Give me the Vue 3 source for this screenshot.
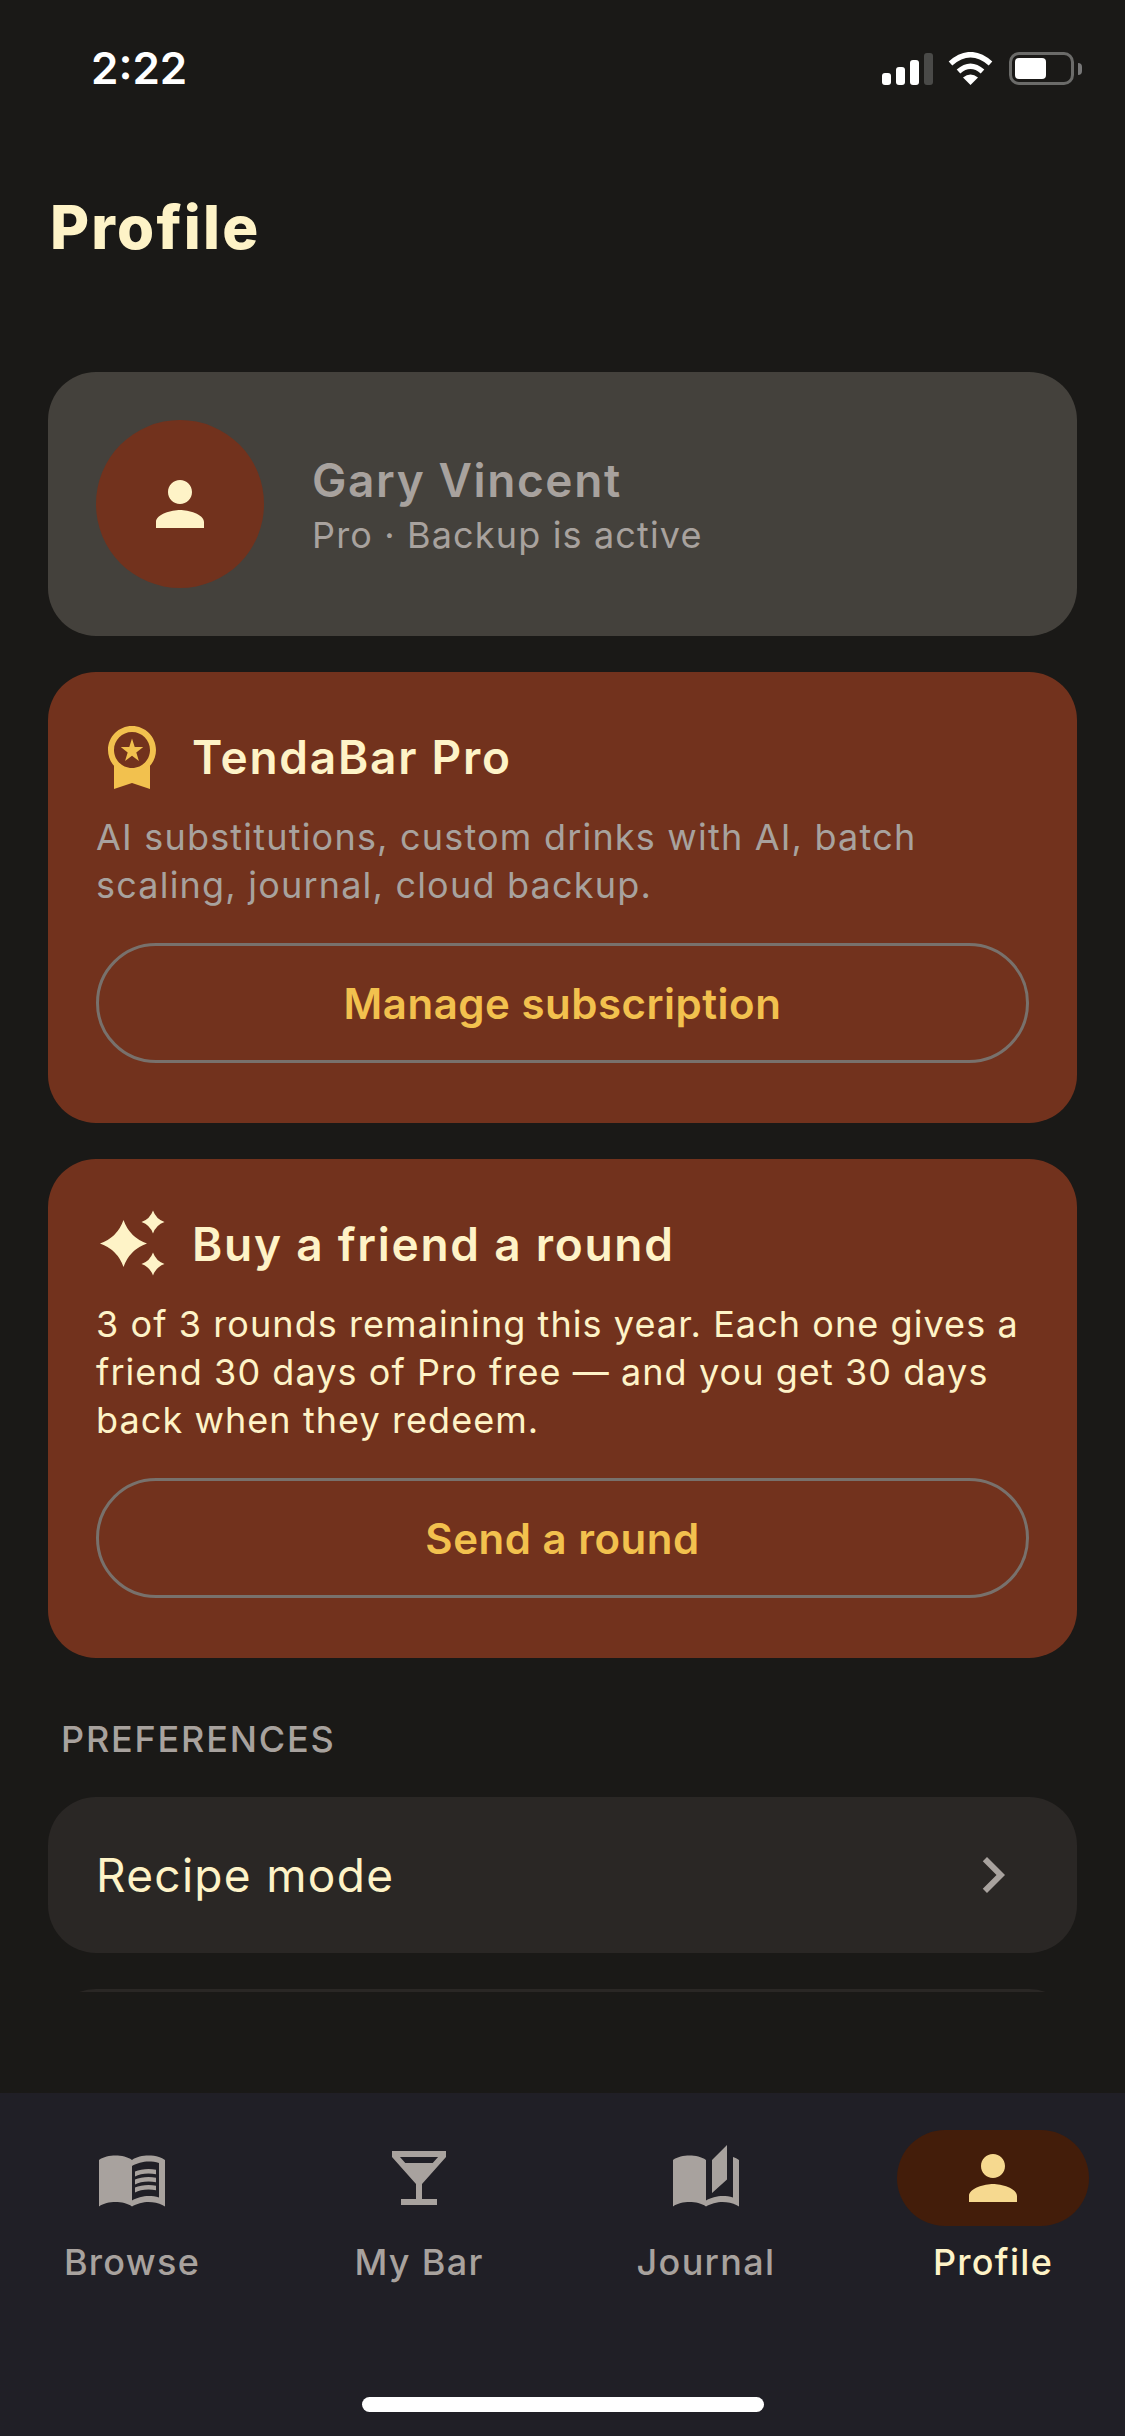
<script setup>
const cards = [
  {
    title: 'TendaBar Pro',
    text: 'AI substitutions, custom drinks with AI, batch scaling, journal, cloud backup.',
    action: 'Manage subscription',
    muted: true,
    icon: 'medal',
  },
  {
    title: 'Buy a friend a round',
    text: '3 of 3 rounds remaining this year. Each one gives a friend 30 days of Pro free — and you get 30 days back when they redeem.',
    action: 'Send a round',
    muted: false,
    icon: 'sparkle',
  },
]

const personPath = 'M12 12c2.21 0 4-1.79 4-4s-1.79-4-4-4-4 1.79-4 4 1.79 4 4 4zm0 2c-2.67 0-8 1.34-8 4v2h16v-2c0-2.66-5.33-4-8-4z'

const tabs = [
  {
    label: 'Browse',
    path: 'M21 5c-1.11-.35-2.33-.5-3.5-.5-1.95 0-4.05.4-5.5 1.5-1.45-1.1-3.55-1.5-5.5-1.5S2.45 4.9 1 6v15.5c1.45-1.1 3.55-1.5 5.5-1.5s4.05.4 5.5 1.5c1.35-.85 3.8-1.5 5.5-1.5 1.65 0 3.35.3 4.75 1.05l.75.45V6c-.6-.45-1.25-.75-2-1zM21 18.5c-1.1-.35-2.3-.5-3.5-.5-1.7 0-4.15.65-5.5 1.5V8c1.35-.85 3.8-1.5 5.5-1.5 1.2 0 2.4.15 3.5.5zM17.5 10.5c.88 0 1.73.09 2.5.26V9.24c-.79-.15-1.64-.24-2.5-.24-1.7 0-3.24.29-4.5.83v1.66c1.13-.64 2.7-.99 4.5-.99zM13 12.49v1.66c1.13-.64 2.7-.99 4.5-.99.88 0 1.73.09 2.5.26V11.9c-.79-.15-1.64-.24-2.5-.24-1.7 0-3.24.3-4.5.83zM17.5 14.33c-1.7 0-3.24.29-4.5.83v1.66c1.13-.64 2.7-.99 4.5-.99.88 0 1.73.09 2.5.26v-1.52c-.79-.16-1.64-.24-2.5-.24z',
  },
  {
    label: 'My Bar',
    path: 'M21 5V3H3v2l8 9v5H6v2h12v-2h-5v-5l8-9zM7.43 7L5.66 5h12.69l-1.78 2H7.43z',
  },
  {
    label: 'Journal',
    path: 'M19 1l-5 5v11l5-4.5V1zM1 6v15.5c1.45-1.1 3.55-1.5 5.5-1.5 1.95 0 4.05.4 5.5 1.5V6c-1.45-1.1-3.55-1.5-5.5-1.5S2.45 4.9 1 6zm22 13.5V6c-.6-.45-1.25-.75-2-1v13.5c-1.1-.35-2.3-.5-3.5-.5-1.7 0-4.15.65-5.5 1.5v2c1.35-.85 3.8-1.5 5.5-1.5 1.65 0 3.35.3 4.75 1.05l.75.45v-2.05z',
  },
  { label: 'Profile', path: personPath, active: true },
]

const starPath = (cx, cy, r) => {
  const k = r * 0.26
  return `M${cx} ${cy - r}Q${cx + k} ${cy - k} ${cx + r} ${cy}Q${cx + k} ${cy + k} ${cx} ${cy + r}Q${cx - k} ${cy + k} ${cx - r} ${cy}Q${cx - k} ${cy - k} ${cx} ${cy - r}Z`
}
const sparklePath = starPath(27.5, 36.5, 23.5) + starPath(57, 15, 11.5) + starPath(57, 57, 11.5)
</script>

<template>
  <div class="phone">
    <div class="status">
      <span class="time">2:22</span>
      <div class="status-icons">
        <div class="signal">
          <i class="bar b1"></i>
          <i class="bar b2"></i>
          <i class="bar b3"></i>
          <i class="bar b4"></i>
        </div>
        <svg class="wifi" width="45" height="33" viewBox="0 0 45 33">
          <path d="M2.5 11.5Q22.5 -6 42.5 11.5" fill="none" stroke="#fff" stroke-width="5.5" />
          <path d="M10.5 19.5Q22.5 9 34.5 19.5" fill="none" stroke="#fff" stroke-width="5.5" />
          <path d="M22.5 33L15 25.5Q22.5 19.5 30 25.5Z" fill="#fff" />
        </svg>
        <div class="battery">
          <div class="battery-fill"></div>
        </div>
        <i class="battery-nub"></i>
      </div>
    </div>

    <h1 class="title">Profile</h1>

    <main class="scroll">
      <section class="user-card">
        <div class="avatar">
          <svg width="72" height="72" viewBox="0 0 24 24"><path :d="personPath" fill="#fef3c7" /></svg>
        </div>
        <div class="user-info">
          <div class="user-name">Gary Vincent</div>
          <div class="user-plan">Pro · Backup is active</div>
        </div>
      </section>

      <section class="promo" v-for="card in cards" :key="card.title">
        <div class="promo-head">
          <svg v-if="card.icon === 'medal'" width="72" height="72" viewBox="0 0 24 24">
            <path d="M9.68 13.69 12 11.93l2.31 1.76-.88-2.85L15.75 9h-2.84L12 6.19 11.09 9H8.25l2.31 1.84-.88 2.85zM20 10c0-4.42-3.58-8-8-8s-8 3.58-8 8c0 2.03.76 3.87 2 5.28V23l6-2 6 2v-7.72c1.24-1.41 2-3.25 2-5.28zm-8-6c3.31 0 6 2.69 6 6s-2.69 6-6 6-6-2.69-6-6 2.69-6 6-6z" fill="#f2c14e" />
          </svg>
          <svg v-else width="72" height="72" viewBox="0 0 72 72">
            <path :d="sparklePath" fill="#fef3c7" />
          </svg>
          <h2>{{ card.title }}</h2>
        </div>
        <p :class="{ muted: card.muted }">{{ card.text }}</p>
        <button>{{ card.action }}</button>
      </section>

      <div class="section-label">PREFERENCES</div>
      <div class="row">
        <span>Recipe mode</span>
        <svg width="72" height="72" viewBox="0 0 24 24">
          <path d="M10 6L8.59 7.41 13.17 12l-4.58 4.59L10 18l6-6z" fill="#a8a29e" />
        </svg>
      </div>
      <div class="row"></div>
    </main>

    <nav class="tabs">
      <div class="tab" :class="{ active: tab.active }" v-for="tab in tabs" :key="tab.label">
        <div class="tab-icon">
          <svg width="72" height="72" viewBox="0 0 24 24"><path :d="tab.path" fill-rule="evenodd" /></svg>
        </div>
        <span>{{ tab.label }}</span>
      </div>
      <div class="home-bar"></div>
    </nav>
  </div>
</template>

<style>
body {
  background: #1a1917;
}
</style>

<style scoped>
.phone {
  width: 1125px;
  height: 2436px;
  display: flex;
  flex-direction: column;
  background: #1a1917;
  font-family: Inter, "Liberation Sans", sans-serif;
  color: #fef3c7;
  overflow: hidden;
}

.status {
  height: 132px;
  flex-shrink: 0;
  display: flex;
  justify-content: space-between;
  align-items: flex-start;
  padding: 0 43px 0 91px;
  box-sizing: border-box;
}
.time {
  margin-top: 42px;
  font-size: 44px;
  line-height: 53px;
  font-weight: 600;
  color: #fff;
}
.status-icons {
  display: flex;
  align-items: flex-start;
  margin-top: 52px;
}
.signal {
  display: flex;
  align-items: flex-end;
  gap: 5px;
  height: 33px;
  margin-right: 15px;
}
.bar {
  width: 9px;
  border-radius: 3px;
  background: #fff;
}
.b1 { height: 12px; }
.b2 { height: 18px; }
.b3 { height: 25px; }
.b4 { height: 32px; background: #4a4a48; }
.wifi {
  margin-right: 16px;
}
.battery {
  width: 65px;
  height: 33px;
  box-sizing: border-box;
  border: 3px solid #6b6b69;
  border-radius: 10px;
  padding: 3px;
}
.battery-fill {
  width: 31px;
  height: 21px;
  background: #fff;
  border-radius: 4px;
}
.battery-nub {
  width: 4px;
  height: 12px;
  margin: 11px 0 0 4px;
  background: #777;
  border-radius: 0 4px 4px 0;
}

.title {
  margin: 59px 0 0 50px;
  font-size: 60px;
  line-height: 72px;
  font-weight: 800;
  letter-spacing: 2.2px;
  flex-shrink: 0;
}

.scroll {
  flex: 1;
  min-height: 0;
  margin-bottom: 101px;
  padding: 109px 48px 0;
  display: flex;
  flex-direction: column;
  gap: 36px;
  overflow: hidden;
}

.user-card {
  flex-shrink: 0;
  display: flex;
  align-items: center;
  gap: 48px;
  padding: 48px;
  background: #44413c;
  border-radius: 48px;
}
.avatar {
  width: 168px;
  height: 168px;
  border-radius: 50%;
  background: #72321d;
  display: flex;
  align-items: center;
  justify-content: center;
}
.user-info {
  padding-top: 3px;
}
.user-name {
  font-size: 46px;
  line-height: 54px;
  font-weight: 600;
  letter-spacing: 1.6px;
  color: #a8a29e;
}
.user-plan {
  margin-top: 4px;
  font-size: 36px;
  line-height: 48px;
  letter-spacing: 1.15px;
  color: #a8a29e;
}

.promo {
  flex-shrink: 0;
  padding: 48px 48px 60px;
  background: #72321d;
  border-radius: 48px;
}
.promo-head {
  display: flex;
  align-items: center;
  gap: 24px;
}
.promo-head h2 {
  margin: 2px 0 0;
  font-size: 46px;
  line-height: 54px;
  font-weight: 600;
  letter-spacing: 1.75px;
  color: #fef3c7;
}
.promo p {
  margin: 21px 0 34px;
  font-size: 36px;
  line-height: 48px;
  letter-spacing: 1.07px;
  color: #fef3c7;
}
.promo p.muted {
  letter-spacing: 1.2px;
  color: #a8a29e;
}
.promo button {
  display: block;
  width: 100%;
  height: 120px;
  box-sizing: border-box;
  background: transparent;
  border: 3px solid #78716c;
  border-radius: 60px;
  font-family: inherit;
  font-size: 42px;
  font-weight: 600;
  letter-spacing: 0.5px;
  color: #f2c14e;
}

.section-label {
  flex-shrink: 0;
  margin: 23px 0 0 13px;
  font-size: 36px;
  line-height: 44px;
  font-weight: 500;
  letter-spacing: 1.8px;
  color: #a8a29e;
}

.row {
  flex-shrink: 0;
  height: 156px;
  box-sizing: border-box;
  padding: 0 48px;
  display: flex;
  align-items: center;
  justify-content: space-between;
  background: #2a2725;
  border-radius: 48px;
  font-size: 46px;
  letter-spacing: 1.3px;
}

.tabs {
  position: relative;
  flex-shrink: 0;
  height: 343px;
  box-sizing: border-box;
  padding: 37px 36px 0;
  display: flex;
  justify-content: space-between;
  background: #201f26;
}
.tab {
  width: 192px;
  display: flex;
  flex-direction: column;
  align-items: center;
  gap: 12px;
  font-size: 36px;
  line-height: 48px;
  font-weight: 500;
  letter-spacing: 1.3px;
  color: #a8a29e;
}
.tab-icon {
  width: 192px;
  height: 96px;
  border-radius: 48px;
  display: flex;
  align-items: center;
  justify-content: center;
}
.tab-icon svg {
  fill: #a8a29e;
}
.tab.active {
  color: #fef3c7;
}
.tab.active .tab-icon {
  background: #431d0a;
}
.tab.active .tab-icon svg {
  fill: #f6d98f;
}
.home-bar {
  position: absolute;
  left: 362px;
  bottom: 24px;
  width: 402px;
  height: 15px;
  border-radius: 8px;
  background: #fff;
}
</style>
